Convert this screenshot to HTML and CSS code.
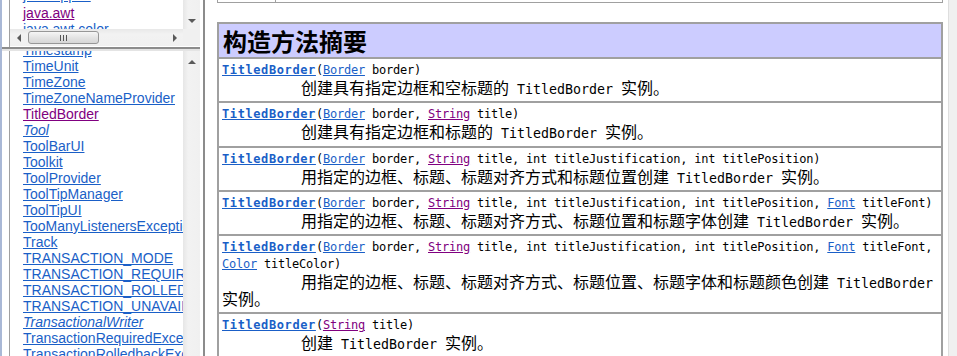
FILE: index.html
```html
<!DOCTYPE html>
<html lang="zh-CN">
  <head>
    <meta charset="UTF-8" />
    <title>TitledBorder (Java Platform SE 6)</title>
    <link rel="stylesheet" href="styles.css">
  </head>
  <body>
    <div class="frames">
      <div class="nav">
        <!-- package list frame -->
        <div class="pkg-frame">
          <div class="pane">
            <div class="view">
              <ul class="list pkg-list">
                <li><a href="#">java.applet</a></li>
                <li><a href="#" class="visited">java.awt</a></li>
                <li><a href="#">java.awt.color</a></li>
              </ul>
            </div>
            <div class="vscroll">
              <span class="btn btn-end"><span class="arrow down"></span></span>
            </div>
            <div class="hscroll">
              <span class="btn"><span class="arrow left"></span></span>
              <span class="thumb"><span class="grip"></span></span>
              <span class="track"></span>
              <span class="btn"><span class="arrow right"></span></span>
            </div>
            <div class="corner"></div>
          </div>
        </div>

        <!-- class list frame -->
        <div class="class-frame">
          <div class="pane">
            <div class="view">
              <ul class="list class-list">
                <li><a href="#">Timestamp</a></li>
                <li><a href="#">TimeUnit</a></li>
                <li><a href="#">TimeZone</a></li>
                <li><a href="#">TimeZoneNameProvider</a></li>
                <li><a href="#" class="visited">TitledBorder</a></li>
                <li><a href="#" class="iface">Tool</a></li>
                <li><a href="#">ToolBarUI</a></li>
                <li><a href="#">Toolkit</a></li>
                <li><a href="#">ToolProvider</a></li>
                <li><a href="#">ToolTipManager</a></li>
                <li><a href="#">ToolTipUI</a></li>
                <li><a href="#">TooManyListenersException</a></li>
                <li><a href="#">Track</a></li>
                <li><a href="#">TRANSACTION_MODE</a></li>
                <li><a href="#">TRANSACTION_REQUIRED</a></li>
                <li><a href="#">TRANSACTION_ROLLEDBACK</a></li>
                <li><a href="#">TRANSACTION_UNAVAILABLE</a></li>
                <li><a href="#" class="iface">TransactionalWriter</a></li>
                <li><a href="#">TransactionRequiredException</a></li>
                <li><a href="#">TransactionRolledbackException</a></li>
              </ul>
            </div>
            <div class="vscroll">
              <span class="btn"><span class="arrow up"></span></span>
            </div>
          </div>
        </div>
      </div>

      <!-- main document frame -->
      <div class="main">
        <div class="doc">
          <div class="prev-table"><span class="prev-cell"></span></div>

          <table class="summary">
            <tr>
              <th>构造方法摘要</th>
            </tr>
            <tr>
              <td>
                <div class="sig"><a href="#" class="ctor">TitledBorder</a>(<a href="#">Border</a>&nbsp;border)</div>
                <div class="desc">创建具有指定边框和空标题的<span class="tt"> TitledBorder </span>实例。</div>
              </td>
            </tr>
            <tr>
              <td>
                <div class="sig"><a href="#" class="ctor">TitledBorder</a>(<a href="#">Border</a>&nbsp;border, <a href="#" class="visited">String</a>&nbsp;title)</div>
                <div class="desc">创建具有指定边框和标题的<span class="tt"> TitledBorder </span>实例。</div>
              </td>
            </tr>
            <tr>
              <td>
                <div class="sig"><a href="#" class="ctor">TitledBorder</a>(<a href="#">Border</a>&nbsp;border, <a href="#" class="visited">String</a>&nbsp;title, int&nbsp;titleJustification, int&nbsp;titlePosition)</div>
                <div class="desc">用指定的边框、标题、标题对齐方式和标题位置创建<span class="tt"> TitledBorder </span>实例。</div>
              </td>
            </tr>
            <tr>
              <td>
                <div class="sig"><a href="#" class="ctor">TitledBorder</a>(<a href="#">Border</a>&nbsp;border, <a href="#" class="visited">String</a>&nbsp;title, int&nbsp;titleJustification, int&nbsp;titlePosition, <a href="#">Font</a>&nbsp;titleFont)</div>
                <div class="desc">用指定的边框、标题、标题对齐方式、标题位置和标题字体创建<span class="tt"> TitledBorder </span>实例。</div>
              </td>
            </tr>
            <tr>
              <td>
                <div class="sig"><a href="#" class="ctor">TitledBorder</a>(<a href="#">Border</a>&nbsp;border, <a href="#" class="visited">String</a>&nbsp;title, int&nbsp;titleJustification, int&nbsp;titlePosition, <a href="#">Font</a>&nbsp;titleFont, <a href="#">Color</a>&nbsp;titleColor)</div>
                <div class="desc">用指定的边框、标题、标题对齐方式、标题位置、标题字体和标题颜色创建<span class="tt"> TitledBorder </span>实例。</div>
              </td>
            </tr>
            <tr>
              <td>
                <div class="sig"><a href="#" class="ctor">TitledBorder</a>(<a href="#" class="visited">String</a>&nbsp;title)</div>
                <div class="desc">创建<span class="tt"> TitledBorder </span>实例。</div>
              </td>
            </tr>
          </table>
        </div>
        <div class="main-scroll"></div>
      </div>
    </div>
  </body>
</html>
```

FILE: styles.css
```css
body {
  margin: 0;
  height: 356px;
  overflow: hidden;
  background: white;
  font-family: "Liberation Sans", Arial, sans-serif;
}

a {
  color: #1a5fc7;
}

a.visited {
  color: #800080;
}

.frames {
  display: grid;
  grid-template-columns: 205px 1fr;
  height: 356px;
}

/* left navigation frames */

.nav {
  display: grid;
  grid-template-rows: 49px 1fr;
  border-left: 2px solid #a9b8d6;
  border-right: 2px solid #8c8c8c;
  padding-right: 3px;
  min-height: 0;
}

.pkg-frame {
  padding-left: 7px;
  border-bottom: 2px solid #8c8c8c;
}

.class-frame {
  padding-left: 7px;
  border-top: 2px solid #e4e4e4;
  min-height: 0;
}

.pane {
  display: grid;
  grid-template-columns: 1fr 17px;
  height: 100%;
  border-left: 1px solid #a0a0a0;
  box-sizing: border-box;
}

.pkg-frame .pane {
  grid-template-rows: 29px 17px;
}

.view {
  overflow: hidden;
  min-width: 0;
}

.list {
  list-style: none;
  margin: 0;
  padding-left: 13px;
  font-size: 14px;
  line-height: 16px;
  white-space: nowrap;
}

.pkg-list {
  margin-top: -13px;
}

.pkg-list li:first-child {
  margin-bottom: 2px;
}

.class-list {
  margin-top: -9px;
}

.iface {
  font-style: italic;
}

/* scrollbars */

.vscroll {
  display: flex;
  flex-direction: column;
  background: linear-gradient(to right, #e6e6e6, #f2f2f2 30%, #f0f0f0);
}

.btn {
  display: flex;
  align-items: center;
  justify-content: center;
  width: 17px;
  height: 17px;
  flex: none;
}

.btn-end {
  margin-top: auto;
}

.arrow {
  width: 0;
  height: 0;
  border: 4px solid transparent;
}

.arrow.down {
  border-top: 4px solid #5a5a5a;
  border-bottom: 0;
  margin-top: 1px;
}

.arrow.up {
  border-bottom: 4px solid #5a5a5a;
  border-top: 0;
  margin-top: 4px;
}

.arrow.left {
  border-right: 4px solid #5a5a5a;
  border-left: 0;
}

.arrow.right {
  border-left: 4px solid #5a5a5a;
  border-right: 0;
}

.hscroll {
  display: flex;
  align-items: center;
  background: linear-gradient(#e8e8e8, #f2f2f2 30%, #f0f0f0);
}

.thumb {
  display: flex;
  align-items: center;
  justify-content: center;
  width: 71px;
  height: 13px;
  margin-left: 1px;
  box-sizing: border-box;
  border: 1px solid #979797;
  border-radius: 3px;
  background: linear-gradient(#f6f6f6, #e4e4e4 50%, #d6d6d6);
}

.grip {
  width: 7px;
  height: 6px;
  background: repeating-linear-gradient(to right, #555 0 1px, transparent 1px 3px);
}

.track {
  flex: 1;
}

.corner {
  background: #f0f0f0;
}

/* main frame */

.main {
  display: grid;
  grid-template-columns: 1fr 9px;
  min-width: 0;
}

.doc {
  padding: 0 5px 0 12px;
  overflow: hidden;
}

.main-scroll {
  background: #f0f0f0;
  border-left: 1px solid #dedede;
}

.prev-table {
  display: flex;
  height: 2px;
  border: 1px solid #a0a0a0;
  border-top: 0;
}

.prev-cell {
  width: 57px;
  border-right: 1px solid #a0a0a0;
}

.summary {
  width: 726px;
  margin-top: 19px;
  border: 1px solid #a0a0a0;
  border-spacing: 0;
}

.summary th {
  padding: 3px 4px;
  border: 1px solid #a0a0a0;
  background: #ccccff;
  text-align: left;
  font-family: "Noto Sans CJK SC", sans-serif;
  font-size: 24px;
  line-height: 27px;
  font-weight: bold;
}

.summary td {
  padding: 3px 3px 5px;
  border: 1px solid #a0a0a0;
}

.sig {
  font-family: "DejaVu Sans Mono", monospace;
  font-size: 12px;
  letter-spacing: -0.22px;
  line-height: 17px;
}

.ctor {
  font-weight: bold;
  letter-spacing: 0.6px;
}

.desc {
  font-family: "Noto Sans CJK SC", sans-serif;
  font-size: 16px;
  line-height: 17px;
  text-indent: 79px;
}

.tt {
  font-family: "DejaVu Sans Mono", monospace;
  font-size: 13.29px;
  line-height: 1;
}
```
